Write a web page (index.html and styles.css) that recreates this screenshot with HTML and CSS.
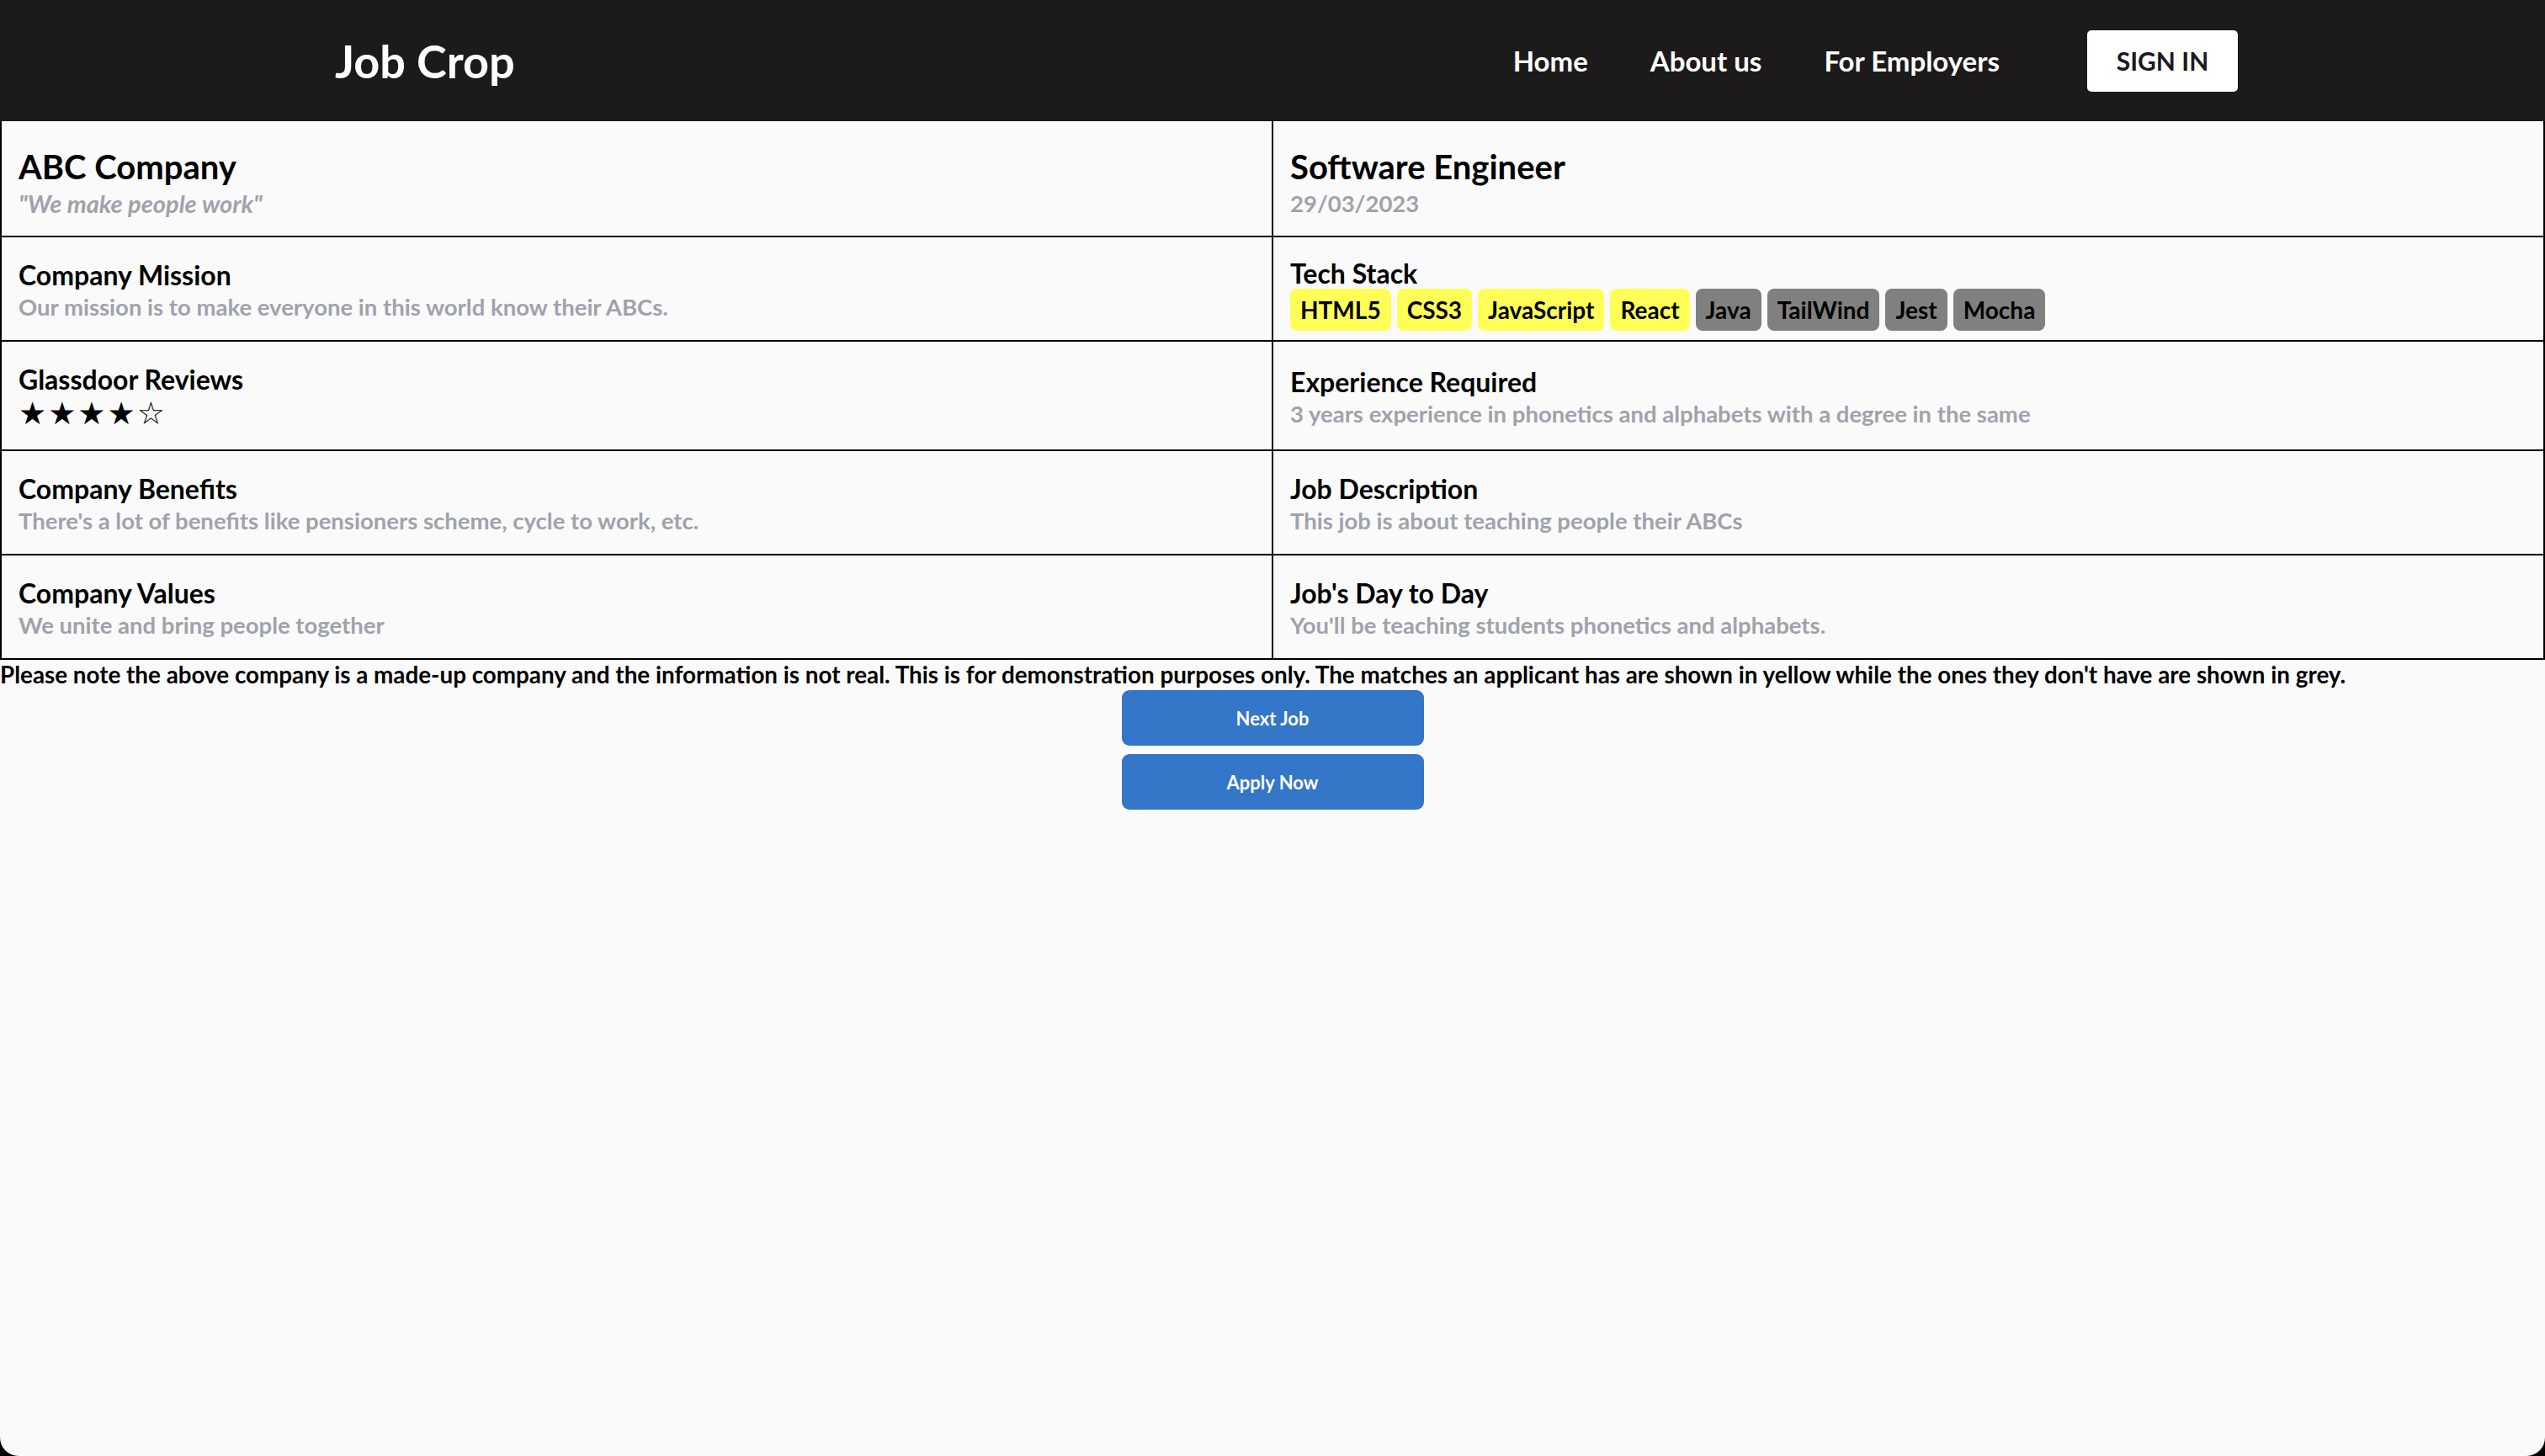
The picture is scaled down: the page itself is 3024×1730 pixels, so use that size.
FILE: index.html
```html
<!DOCTYPE html>
<html lang="en">
<head>
<meta charset="utf-8">
<title>Job Crop</title>
<link rel="stylesheet" href="styles.css">
</head>
<body>
<header class="topbar">
  <div class="brand">Job Crop</div>
  <nav class="nav">
    <a class="nav-link" href="#">Home</a>
    <a class="nav-link" href="#">About us</a>
    <a class="nav-link" href="#">For Employers</a>
    <button class="signin">SIGN IN</button>
  </nav>
</header>

<main>
  <section class="board">
    <div class="cell cell-top">
      <h1 class="title">ABC Company</h1>
      <p class="tagline">"We make people work"</p>
    </div>
    <div class="cell cell-top">
      <h1 class="title">Software Engineer</h1>
      <p class="desc">29/03/2023</p>
    </div>

    <div class="cell">
      <h2 class="heading">Company Mission</h2>
      <p class="desc">Our mission is to make everyone in this world know their ABCs.</p>
    </div>
    <div class="cell cell-tech">
      <h2 class="heading heading-tight">Tech Stack</h2>
      <div class="chips">
        <span class="chip chip-match">HTML5</span>
        <span class="chip chip-match">CSS3</span>
        <span class="chip chip-match">JavaScript</span>
        <span class="chip chip-match">React</span>
        <span class="chip chip-miss">Java</span>
        <span class="chip chip-miss">TailWind</span>
        <span class="chip chip-miss">Jest</span>
        <span class="chip chip-miss">Mocha</span>
      </div>
    </div>

    <div class="cell">
      <h2 class="heading">Glassdoor Reviews</h2>
      <div class="stars">★★★★☆</div>
    </div>
    <div class="cell">
      <h2 class="heading">Experience Required</h2>
      <p class="desc">3 years experience in phonetics and alphabets with a degree in the same</p>
    </div>

    <div class="cell">
      <h2 class="heading">Company Benefits</h2>
      <p class="desc">There's a lot of benefits like pensioners scheme, cycle to work, etc.</p>
    </div>
    <div class="cell">
      <h2 class="heading">Job Description</h2>
      <p class="desc">This job is about teaching people their ABCs</p>
    </div>

    <div class="cell">
      <h2 class="heading">Company Values</h2>
      <p class="desc">We unite and bring people together</p>
    </div>
    <div class="cell">
      <h2 class="heading">Job's Day to Day</h2>
      <p class="desc">You'll be teaching students phonetics and alphabets.</p>
    </div>
  </section>

  <p class="note">Please note the above company is a made-up company and the information is not real. This is for demonstration purposes only. The matches an applicant has are shown in yellow while the ones they don't have are shown in grey.</p>

  <div class="actions">
    <button class="action">Next Job</button>
    <button class="action">Apply Now</button>
  </div>
</main>
</body>
</html>
```

FILE: styles.css
```css
html {
  background: #000;
}

body {
  margin: 0;
  min-height: 100vh;
  background: #fafafa;
  font-family: Lato, "Open Sans", "Liberation Sans", sans-serif;
  font-weight: 700;
  color: #000;
  border-bottom-left-radius: 22px;
  border-bottom-right-radius: 22px;
  overflow: hidden;
}

/* ---------- header ---------- */
.topbar {
  height: 144px;
  background: #1c1a1b;
  display: flex;
  align-items: center;
  padding: 0 365px 0 398px;
}

.brand {
  color: #fff;
  font-size: 54px;
  line-height: 1;
  margin-top: 2px;
}

.nav {
  margin-left: auto;
  display: flex;
  align-items: center;
}

.nav-link {
  color: #fff;
  text-decoration: none;
  font-size: 33px;
  margin-right: 74px;
}

.nav-link:last-of-type {
  margin-right: 104px;
}

.signin {
  width: 179px;
  height: 73px;
  border: none;
  border-radius: 5px;
  background: #fff;
  color: #1c1a1b;
  font-family: inherit;
  font-weight: 700;
  font-size: 30px;
  padding: 0;
}

/* ---------- info board ---------- */
.board {
  display: grid;
  grid-template-columns: 1fr 1fr;
  gap: 2px;
  background: #000;
  border: 2px solid #000;
  border-top: none;
}

.cell {
  background: #fafafa;
  padding: 25px 20px 21px;
  display: flex;
  flex-direction: column;
  justify-content: center;
}

.cell-top {
  padding: 28px 20px 20px;
}

.cell-tech {
  padding-bottom: 11px;
}

.title {
  margin: 0;
  font-size: 40px;
  line-height: 52px;
}

.tagline {
  margin: 0;
  font-size: 29px;
  line-height: 36px;
  font-style: italic;
  color: #a0a2ab;
}

.heading {
  margin: 0;
  font-size: 32px;
  line-height: 40px;
}

.heading-tight {
  line-height: 36px;
}

.desc {
  margin: 0;
  font-size: 27.5px;
  line-height: 36px;
  color: #a0a2ab;
}

.stars {
  font-family: "DejaVu Sans", sans-serif;
  font-size: 37px;
  line-height: 42px;
  letter-spacing: 2px;
  font-weight: 400;
}

.chips {
  display: flex;
  flex-wrap: wrap;
  gap: 7px;
}

.chip {
  height: 50px;
  line-height: 50px;
  padding: 0 12px;
  border-radius: 8px;
  font-size: 28px;
  color: #000;
}

.chip-match {
  background: #ffff57;
}

.chip-miss {
  background: #808080;
}

/* ---------- footer ---------- */
.note {
  margin: 0;
  font-size: 27.8px;
  line-height: 36px;
}

.actions {
  display: flex;
  flex-direction: column;
  align-items: center;
  gap: 10px;
}

.action {
  width: 359px;
  height: 66px;
  border: none;
  border-radius: 9px;
  background: #3476c8;
  color: #fff;
  font-family: inherit;
  font-weight: 700;
  font-size: 22px;
  padding: 0;
}
```
